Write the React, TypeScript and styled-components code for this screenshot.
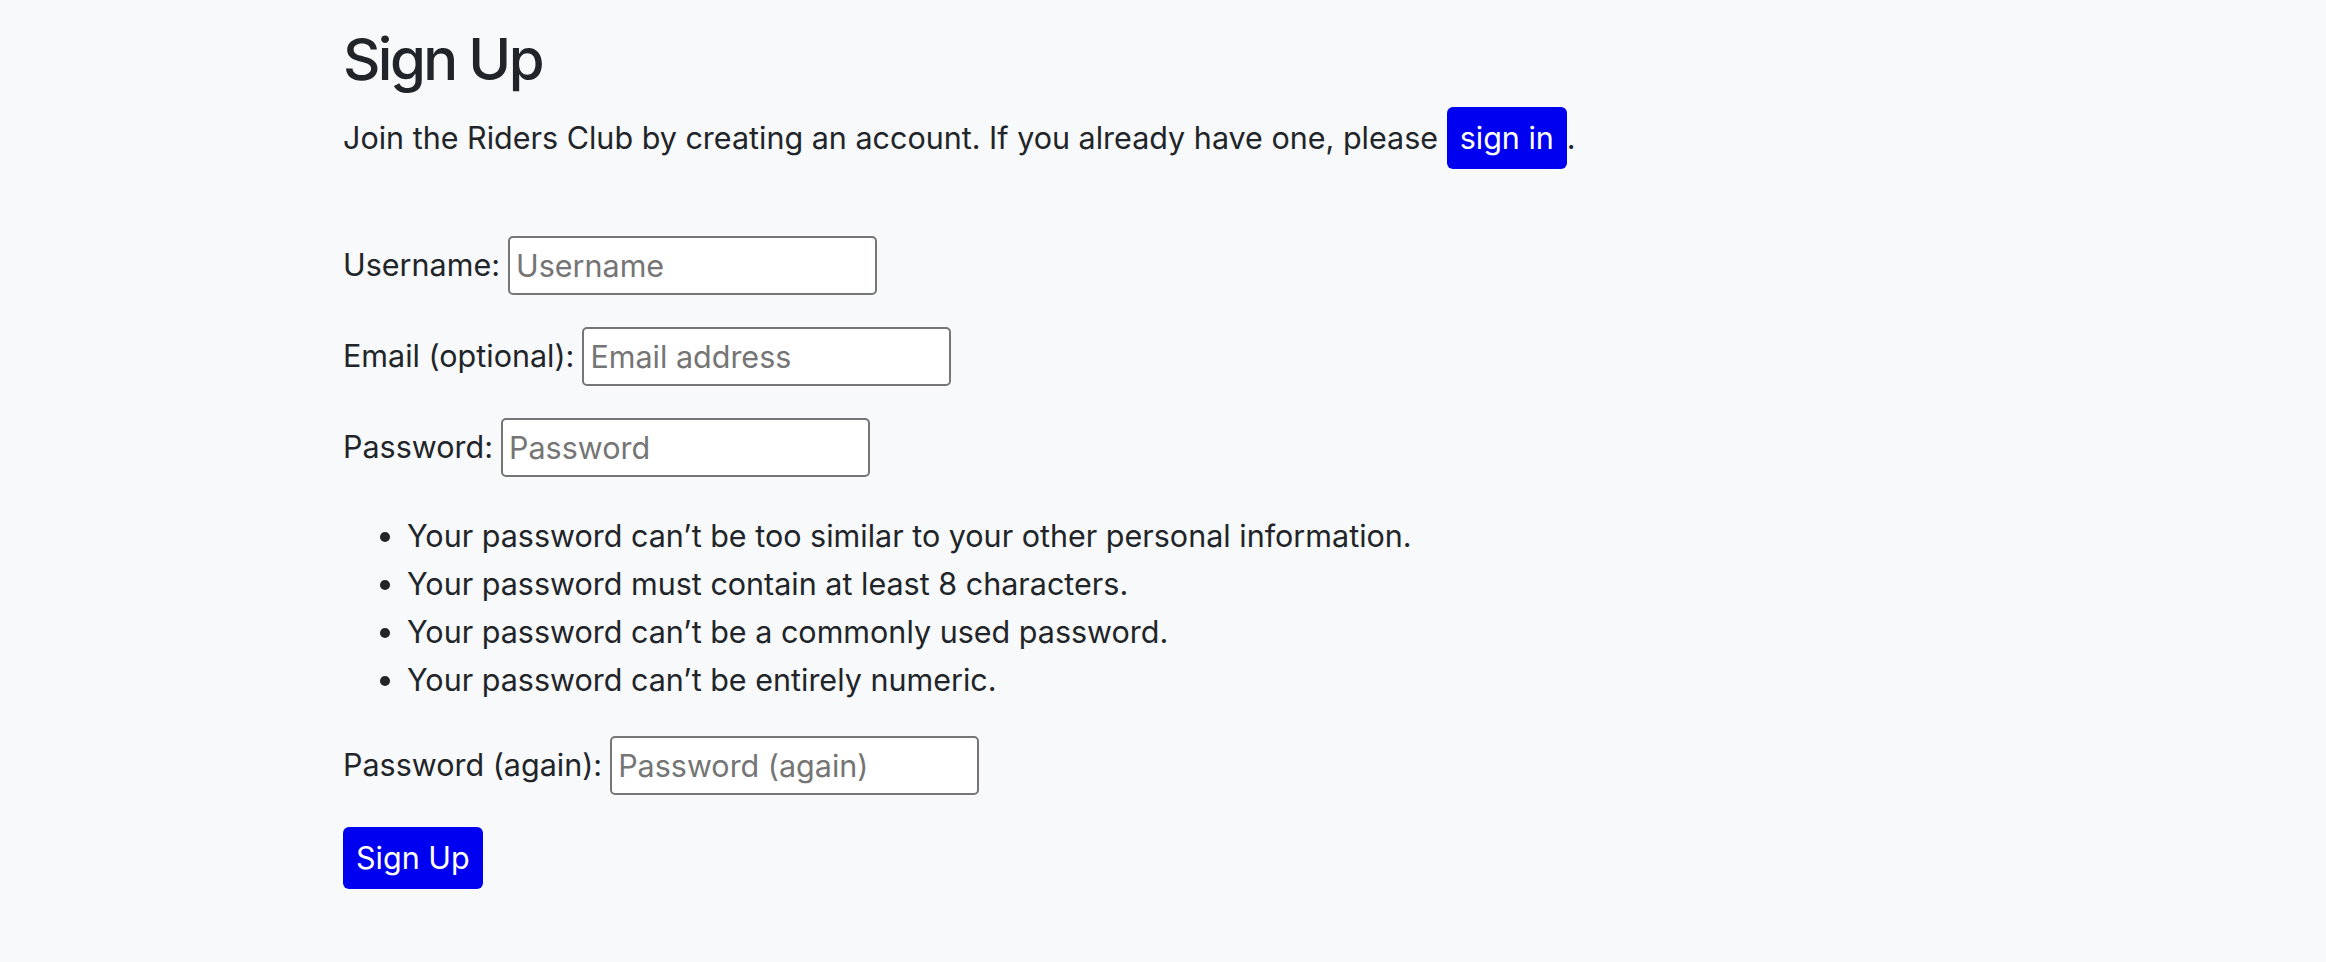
import React from "react";
import styled, { createGlobalStyle } from "styled-components";

const GlobalStyle = createGlobalStyle`
  html, body {
    margin: 0;
    padding: 0;
    background: #f8f9fa;
  }
  body {
    font-family: Inter, "Noto Sans", "Liberation Sans", sans-serif;
    font-size: 30.5px;
    line-height: 48px;
    color: #212529;
  }
  * { box-sizing: border-box; }
`;

const Page = styled.main`
  max-width: 1640px;
  margin: 0 auto;
  padding-top: 25px;
`;

const Title = styled.h2`
  margin: 0 0 12px;
  font-size: 58px;
  font-weight: 500;
  line-height: 1.2;
  letter-spacing: -2.6px;
`;

const Intro = styled.p`
  margin: 0 0 67px;
`;

const BlueButton = styled.button`
  display: inline-block;
  font-family: inherit;
  font-size: 30.5px;
  line-height: 48px;
  color: #ffffff;
  background: #0000f0;
  border: none;
  border-radius: 6px;
  padding: 7px 13px;
  cursor: pointer;
`;

const Field = styled.p`
  display: flex;
  align-items: center;
  gap: 8px;
  margin: 0 0 32px;
`;

const Label = styled.label`
  white-space: nowrap;
`;

const Input = styled.input`
  width: 369px;
  height: 59px;
  border: 2px solid #767676;
  border-radius: 5px;
  background: #ffffff;
  padding: 0 6px;
  font-family: inherit;
  font-size: 30.5px;
  color: #212529;
  &::placeholder {
    color: #757575;
  }
`;

const HelpList = styled.ul`
  margin: 35px 0 32px;
  padding-left: 64px;
  li {
    line-height: 48px;
  }
`;

const fields = [
  { id: "username", label: "Username:", placeholder: "Username", type: "text" },
  { id: "email", label: "Email (optional):", placeholder: "Email address", type: "email" },
  { id: "password1", label: "Password:", placeholder: "Password", type: "password" },
];

const rules = [
  "Your password can\u2019t be too similar to your other personal information.",
  "Your password must contain at least 8 characters.",
  "Your password can\u2019t be a commonly used password.",
  "Your password can\u2019t be entirely numeric.",
];

export default function App() {
  return (
    <>
      <GlobalStyle />
      <Page>
        <Title>Sign Up</Title>
        <Intro>
          Join the Riders Club by creating an account. If you already have one, please{" "}
          <BlueButton type="button">sign in</BlueButton>.
        </Intro>
        <form onSubmit={(e) => e.preventDefault()}>
          {fields.map((f) => (
            <Field key={f.id}>
              <Label htmlFor={f.id}>{f.label}</Label>
              <Input id={f.id} type={f.type} placeholder={f.placeholder} />
            </Field>
          ))}
          <HelpList>
            {rules.map((r) => (
              <li key={r}>{r}</li>
            ))}
          </HelpList>
          <Field>
            <Label htmlFor="password2">Password (again):</Label>
            <Input id="password2" type="password" placeholder="Password (again)" />
          </Field>
          <BlueButton type="submit">Sign Up</BlueButton>
        </form>
      </Page>
    </>
  );
}
